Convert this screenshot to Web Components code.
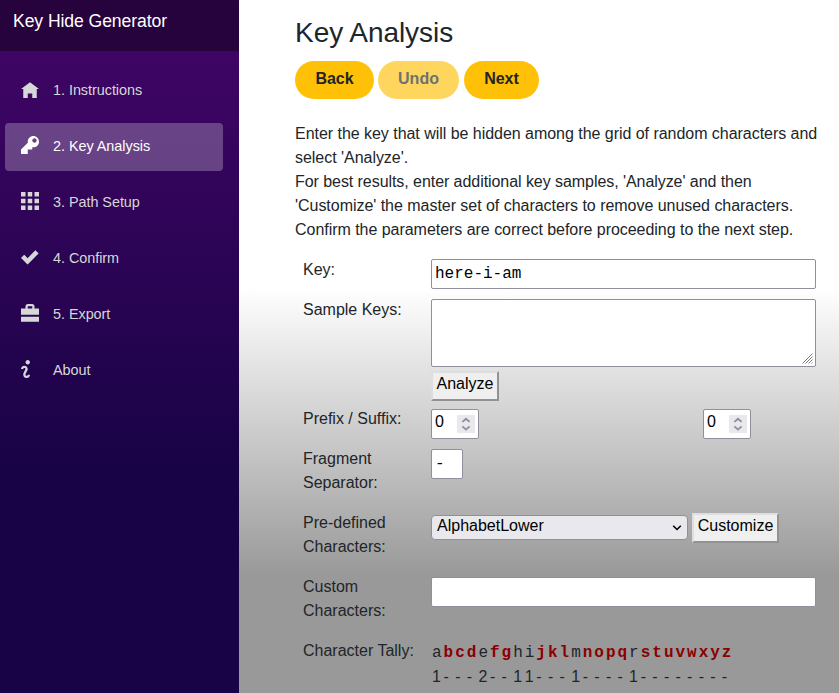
<!DOCTYPE html>
<html lang="en">
<head>
<meta charset="utf-8">
<title>Key Hide Generator</title>
<style>
html, body { margin: 0; height: 100%; overflow: hidden; }
body { font: 16px/24px "Liberation Sans", Arial, sans-serif; color: #212529; }
</style>
</head>
<body>
<key-app></key-app>
<script>
const define = (name, html, setup) => customElements.define(name, class extends HTMLElement {
  constructor() {
    super();
    this.attachShadow({ mode: "open" });
  }
  connectedCallback() {
    const t = document.createElement("template");
    t.innerHTML = html;
    this.shadowRoot.replaceChildren(t.content.cloneNode(true));
    if (setup) setup(this, this.shadowRoot);
  }
});

const ICONS = {
  home: '<path transform="translate(0 1)" d="M4 0l-4 3h1v4h2v-2h2v2h2v-4.03l1 .03-4-3z"/>',
  key: '<path d="M5.5 0c-1.38 0-2.5 1.12-2.5 2.5 0 .16 0 .32.03.47l-3.03 3.03v2h3v-2h2v-1l.03-.03c.15.03.31.03.47.03 1.38 0 2.5-1.12 2.5-2.5s-1.12-2.5-2.5-2.5zm.5 1c.55 0 1 .45 1 1s-.45 1-1 1-1-.45-1-1 .45-1 1-1z"/>',
  grid: '<path d="M0 0v2h2v-2h-2zm3 0v2h2v-2h-2zm3 0v2h2v-2h-2zm-6 3v2h2v-2h-2zm3 0v2h2v-2h-2zm3 0v2h2v-2h-2zm-6 3v2h2v-2h-2zm3 0v2h2v-2h-2zm3 0v2h2v-2h-2z"/>',
  check: '<path transform="translate(0 1)" d="M6.41 0l-.69.72-2.78 2.78-.81-.78-.72-.72-1.41 1.41.72.72 1.5 1.5.69.72.72-.72 3.5-3.5.72-.72-1.44-1.41z"/>',
  briefcase: '<path d="M3 0c-.55 0-1 .45-1 1v1h-1.91c-.06 0-.09.04-.09.09v2.71h8v-2.71c0-.06-.04-.09-.09-.09h-1.91v-1c0-.55-.45-1-1-1h-2zm0 1h2v1h-2v-1zm-3 4.7v2.2h8v-2.2z"/>',
  info: '<path d="M3 0c-.55 0-1 .45-1 1s.45 1 1 1 1-.45 1-1-.45-1-1-1zm-1.5 2.5c-.83 0-1.5.67-1.5 1.5h1c0-.28.22-.5.5-.5s.5.22.5.5-1 1.64-1 2.5c0 .86.67 1.5 1.5 1.5s1.5-.67 1.5-1.5h-1c0 .28-.22.5-.5.5s-.5-.22-.5-.5c0-.36 1-1.84 1-2.5 0-.81-.67-1.5-1.5-1.5z"/>'
};

define("nav-item", `<style>
:host { display: flex; align-items: center; height: 48px; padding-left: 16px; gap: 14px; border-radius: 4px; color: #d7d7d7; font-size: 14.4px; letter-spacing: -.03px; box-sizing: border-box; }
:host([active]) { background: rgba(255,255,255,.25); color: #fff; }
svg { width: 18px; height: 18px; fill: currentColor; margin-top: -4px; }
span { margin-top: -2px; }
</style><svg viewBox="0 0 8 8"></svg><span><slot></slot></span>`,
(el, root) => { root.querySelector("svg").innerHTML = ICONS[el.getAttribute("icon")]; });

define("side-bar", `<style>
:host { display: block; width: 239px; background: linear-gradient(180deg, #430568 0%, #170345 70%); }
header { height: 51px; padding: 9px 0 0 13px; box-sizing: border-box; font-size: 17.6px; letter-spacing: -.08px; color: #fff; background: rgba(0,0,0,.4); }
nav { display: grid; gap: 8px; padding: 16px 16px 0 5px; }
</style><header>Key Hide Generator</header>
<nav>
<nav-item icon="home">1. Instructions</nav-item>
<nav-item icon="key" active>2. Key Analysis</nav-item>
<nav-item icon="grid">3. Path Setup</nav-item>
<nav-item icon="check">4. Confirm</nav-item>
<nav-item icon="briefcase">5. Export</nav-item>
<nav-item icon="info">About</nav-item>
</nav>`);

define("pill-button", `<style>
:host { display: block; }
button { display: block; width: 100%; height: 38px; border: 0; border-radius: 19px; padding: 0 0 3px; background: #ffc107; color: #212529; font: bold 16px/24px "Liberation Sans", Arial, sans-serif; }
:host([disabled]) button { opacity: .65; }
</style><button><slot></slot></button>`);

define("bevel-button", `<style>
:host { display: block; }
button { display: block; width: 100%; height: 30px; border: 2px solid; border-color: #dedede #929292 #929292 #dedede; border-radius: 0; padding: 0 0 4px; background: #efefef; color: #000; font: 16px/22px "Liberation Sans", Arial, sans-serif; }
</style><button><slot></slot></button>`);

define("text-box", `<style>
:host { display: block; box-sizing: border-box; height: 30px; border: 1px solid #8f8f9d; border-radius: 2px; background: #fff; color: #000; padding: 2px 3px; position: relative; }
svg { position: absolute; right: 2px; bottom: 2px; display: none; }
:host([multiline]) { height: 68px; }
:host([multiline]) svg { display: block; }
:host([mono]) { font-family: "Liberation Mono", monospace; }
</style><slot></slot><svg width="11" height="11" viewBox="0 0 11 11" fill="none" stroke="#777" stroke-width="1"><path d="M.5 10.5l10-10M3.5 10.5l7-7M6.5 10.5l4-4M9.5 10.5l1-1"/></svg>`);

define("number-box", `<style>
:host { display: flex; justify-content: space-between; box-sizing: border-box; width: 48px; height: 30px; border: 1px solid #8f8f9d; border-radius: 2px; background: #fff; color: #000; padding: 0 3px; }
svg { margin-top: 5px; }
</style><span><slot></slot></span><svg width="18" height="18"><rect width="18" height="18" fill="#e9e9ed"/><path d="M5.4 6.9L9 3.7l3.6 3.2M5.4 11.4L9 14.6l3.6-3.2" fill="none" stroke="#8f8f9d" stroke-width="1.9"/></svg>`);

define("select-box", `<style>
:host { display: flex; justify-content: space-between; box-sizing: border-box; width: 257px; height: 25px; border: 1px solid #8f8f9d; border-radius: 4px; background: #e9e9ed; color: #000; padding: 0 5px; line-height: 20px; }
svg { margin-top: 8px; }
</style><span><slot></slot></span><svg width="10" height="8" fill="none" stroke="#000" stroke-width="1.6"><path d="M1.2 1.8L5 5.5l3.8-3.7"/></svg>`);

define("char-tally", `<style>
:host { display: grid; grid-template-columns: repeat(26, 11.6px); grid-template-rows: 24px 24px; padding-left: 1px; }
.c { font-family: "Liberation Mono", monospace; }
.u { color: #8b0000; font-weight: bold; }
</style>`, (el, root) => {
  const counts = { a: 1, e: 2, h: 1, i: 1, m: 1, r: 1 };
  const letters = [..."abcdefghijklmnopqrstuvwxyz"];
  const add = (text, cls) => {
    const s = document.createElement("span");
    s.textContent = text;
    s.className = cls;
    root.append(s);
  };
  letters.forEach(l => add(l, counts[l] ? "c" : "c u"));
  letters.forEach(l => add(counts[l] || "-", ""));
});

define("form-row", `<style>
:host { display: grid; grid-template-columns: 128px 385px; align-items: start; }
.field { display: flex; align-items: start; }
</style><div><slot name="label"></slot></div><div class="field"><slot></slot></div>`);

define("key-page", `<style>
:host { display: block; box-sizing: border-box; padding: 16px 20px 0 56px; background: linear-gradient(180deg, #fff 0, #fff 288px, #999 576px); overflow: hidden; }
h1 { margin: 0; font-size: 28px; line-height: 34px; font-weight: 400; letter-spacing: -.05px; }
.buttons { display: grid; grid-template-columns: 79px 81px 75px; margin-top: 11px; column-gap: 4px; }
.buttons pill-button:last-child { margin: 0 -1px 0 1px; }
.intro { margin-top: 23px; white-space: nowrap; letter-spacing: -.035px; }
.intro span { letter-spacing: -.06px; }
form-row { margin-left: 8px; }
.full { width: 385px; }
</style>
<h1>Key Analysis</h1>
<div class="buttons"><pill-button>Back</pill-button><pill-button disabled>Undo</pill-button><pill-button>Next</pill-button></div>
<div class="intro">Enter the key that will be hidden among the grid of random characters and<br>select 'Analyze'.<br><span>For best results, enter additional key samples, 'Analyze' and then</span><br>'Customize' the master set of characters to remove unused characters.<br>Confirm the parameters are correct before proceeding to the next step.</div>
<form-row style="margin-top:16px;height:40px"><span slot="label">Key:</span><text-box class="full" mono style="margin-top:1px">here-i-am</text-box></form-row>
<form-row style="height:72px"><span slot="label">Sample Keys:</span><text-box class="full" multiline style="margin-top:1px"></text-box></form-row>
<form-row style="height:37px"><bevel-button style="width:68px;margin-top:1px">Analyze</bevel-button></form-row>
<form-row style="height:40px"><span slot="label">Prefix / Suffix:</span><number-box style="margin-top:2px">0</number-box><number-box style="margin:2px 0 0 224px">0</number-box></form-row>
<form-row style="height:64px"><span slot="label">Fragment<br>Separator:</span><text-box mono style="width:32px;margin-top:2px">-</text-box></form-row>
<form-row style="height:64px"><span slot="label">Pre-defined<br>Characters:</span><select-box style="margin-top:4px">AlphabetLower</select-box><bevel-button style="width:87px;margin:2px 0 0 4px">Customize</bevel-button></form-row>
<form-row style="height:64px"><span slot="label">Custom<br>Characters:</span><text-box class="full" style="margin-top:2px"></text-box></form-row>
<form-row><span slot="label">Character Tally:</span><char-tally style="margin-top:2px"></char-tally></form-row>`);

define("key-app", `<style>
:host { display: grid; grid-template-columns: 239px 1fr; width: 839px; height: 693px; overflow: hidden; }
</style><side-bar></side-bar><key-page></key-page>`);
</script>
</body>
</html>
